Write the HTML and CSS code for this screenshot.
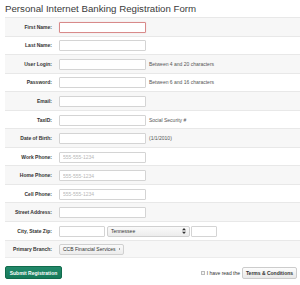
FILE: index.html
```html
<!DOCTYPE html>
<html lang="en">
<head>
    <meta charset="UTF-8">
    <title>Personal Internet Banking Registration Form</title>
    <link rel="stylesheet" href="styles.css">
</head>
<body>
    <h1>Personal Internet Banking Registration Form</h1>
    <form class="reg-form">
        <div class="row">
            <label>First Name:</label>
            <input type="text" class="field error">
        </div>
        <div class="row">
            <label>Last Name:</label>
            <input type="text" class="field">
        </div>
        <div class="row">
            <label>User Login:</label>
            <input type="text" class="field">
            <span class="note">Between 4 and 20 characters</span>
        </div>
        <div class="row">
            <label>Password:</label>
            <input type="password" class="field">
            <span class="note">Between 6 and 16 characters</span>
        </div>
        <div class="row">
            <label>Email:</label>
            <input type="text" class="field">
        </div>
        <div class="row">
            <label>TaxID:</label>
            <input type="text" class="field">
            <span class="note">Social Security #</span>
        </div>
        <div class="row">
            <label>Date of Birth:</label>
            <input type="text" class="field">
            <span class="note">(1/1/2010)</span>
        </div>
        <div class="row">
            <label>Work Phone:</label>
            <input type="text" class="field" placeholder="555-555-1234">
        </div>
        <div class="row">
            <label>Home Phone:</label>
            <input type="text" class="field" placeholder="555-555-1234">
        </div>
        <div class="row">
            <label>Cell Phone:</label>
            <input type="text" class="field" placeholder="555-555-1234">
        </div>
        <div class="row">
            <label>Street Address:</label>
            <input type="text" class="field">
        </div>
        <div class="row">
            <label>City, State Zip:</label>
            <input type="text" class="field city">
            <div class="select state">
                <span>Tennessee</span>
                <svg width="4" height="6" viewBox="0 0 4 6"><path d="M2 0 L4 2.3 H0 Z M2 6 L4 3.7 H0 Z" fill="#333"/></svg>
            </div>
            <input type="text" class="field zip">
        </div>
        <div class="row">
            <label>Primary Branch:</label>
            <div class="select branch">
                <span>CCB Financial Services</span>
                <svg width="4" height="6" viewBox="0 0 4 6"><path d="M2 0 L4 2.3 H0 Z M2 6 L4 3.7 H0 Z" fill="#333"/></svg>
            </div>
        </div>

        <div class="form-footer">
            <button type="button" class="btn-submit">Submit Registration</button>
            <div class="terms">
                <span class="check"></span>
                <span>I have read the</span>
                <button type="button" class="btn-terms">Terms &amp; Conditions</button>
            </div>
        </div>
    </form>
</body>
</html>
```

FILE: styles.css
```css
body {
    margin: 0;
    padding: 0 0 0 5px;
    font-family: "Liberation Sans", Arial, sans-serif;
    color: #333;
    overflow: hidden;
}
h1 {
    font-size: 9.7px;
    font-weight: normal;
    color: #3a3a3a;
    margin: 0;
    padding-top: 3px;
    height: 14px;
    line-height: 11px;
}
.reg-form {
    margin: 0;
}
.row {
    display: flex;
    align-items: center;
    box-sizing: border-box;
    height: 18.55px;
    border-top: 1px solid #e8e8e8;
    font-size: 5px;
    white-space: nowrap;
}
.row:nth-child(odd) {
    background-color: #f7f7f7;
}
.row:nth-child(13) {
    border-bottom: 1px solid #ececec;
}
.row label {
    width: 47px;
    text-align: right;
    font-weight: bold;
    color: #333;
    padding-right: 7px;
    flex-shrink: 0;
}
.field {
    box-sizing: border-box;
    width: 87px;
    height: 11px;
    margin: 1px 0 0 0;
    padding: 0 3px;
    border: 1px solid #d4d4d4;
    border-radius: 1px;
    background-color: white;
    font-family: inherit;
    font-size: 5px;
    outline: none;
}
.field::placeholder {
    color: #b8b8b8;
}
.field.error {
    border-color: #d88a8a;
    box-shadow: 0 0 1px rgba(220, 100, 100, 0.4);
}
.field.city {
    width: 46px;
}
.field.zip {
    width: 26px;
    margin-left: 1px;
}
.note {
    margin-left: 3px;
    color: #555;
}
.select {
    box-sizing: border-box;
    display: flex;
    align-items: center;
    justify-content: space-between;
    gap: 3px;
    height: 11px;
    margin-top: 1px;
    padding: 0 3px 0 3px;
    border: 1px solid #d0d0d0;
    border-radius: 2px;
    background: linear-gradient(#fafafa, #ececec);
    color: #333;
    flex-shrink: 0;
}
.select.state {
    width: 83px;
    margin-left: 2px;
}
.select.branch {
    width: 65px;
}
.form-footer {
    display: flex;
    align-items: center;
    justify-content: space-between;
    margin-top: 8px;
    padding-right: 3px;
}
.btn-submit {
    height: 13px;
    width: 57px;
    padding: 0;
    border: 1px solid #116b4c;
    border-radius: 2px;
    background: linear-gradient(#23896a, #177a5a);
    color: white;
    font-family: inherit;
    font-size: 5px;
    font-weight: bold;
}
.terms {
    display: flex;
    align-items: center;
    font-size: 5px;
    color: #333;
}
.check {
    box-sizing: border-box;
    width: 4px;
    height: 4px;
    border: 1px solid #bbb;
    background: #f4f4f4;
    margin-right: 2px;
}
.btn-terms {
    height: 12px;
    width: 55px;
    margin-left: 2px;
    padding: 0;
    border: 1px solid #ccc;
    border-radius: 2px;
    background: linear-gradient(#fdfdfd, #e8e8e8);
    color: #333;
    font-family: inherit;
    font-size: 5px;
    font-weight: bold;
}
```
